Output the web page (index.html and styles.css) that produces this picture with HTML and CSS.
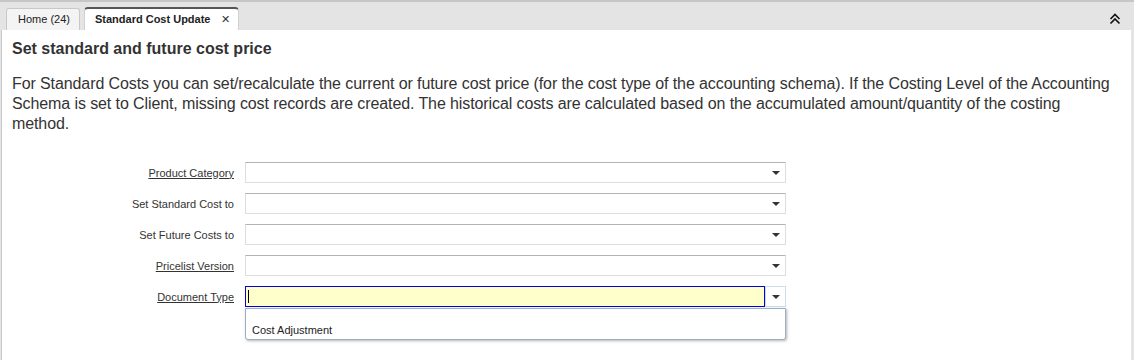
FILE: index.html
```html
<!DOCTYPE html>
<html lang="en">
<head>
  <meta charset="UTF-8">
  <title>Standard Cost Update</title>
  <link rel="stylesheet" href="styles.css">
</head>
<body>

<div class="window">
  <div class="tabbar">
    <div class="tab">Home (24)</div>
    <div class="tab active">Standard Cost Update <span class="close">&#x2715;</span></div>
    <div class="spacer"></div>
    <svg class="collapse" width="12" height="12" viewBox="0 0 12 12">
      <path d="M1.5 6 L6 1.5 L10.5 6 M1.5 10.5 L6 6 L10.5 10.5" fill="none" stroke="#111" stroke-width="1.6"/>
    </svg>
  </div>

  <div class="content">
    <h1 class="title">Set standard and future cost price</h1>
    <p class="desc">For Standard Costs you can set/recalculate the current or future cost price (for the cost type of the accounting schema). If the Costing Level of the Accounting Schema is set to Client, missing cost records are created. The historical costs are calculated based on the accumulated amount/quantity of the costing method.</p>

    <div class="form">
      <div class="row">
        <label class="lbl link">Product Category</label>
        <div class="combo"><div class="field"></div><div class="arrow"></div></div>
      </div>
      <div class="row">
        <label class="lbl">Set Standard Cost to</label>
        <div class="combo"><div class="field"></div><div class="arrow"></div></div>
      </div>
      <div class="row">
        <label class="lbl">Set Future Costs to</label>
        <div class="combo"><div class="field"></div><div class="arrow"></div></div>
      </div>
      <div class="row">
        <label class="lbl link">Pricelist Version</label>
        <div class="combo"><div class="field"></div><div class="arrow"></div></div>
      </div>
      <div class="row">
        <label class="lbl link">Document Type</label>
        <div class="combo open">
          <div class="field focus"><span class="caret"></span></div><div class="arrow"></div>
          <div class="popup">
            <div class="item empty"></div>
            <div class="item">Cost Adjustment</div>
          </div>
        </div>
      </div>
    </div>
  </div>
</div>

</body>
</html>
```

FILE: styles.css
```css
body { margin: 0; font-family: "Liberation Sans", Arial, sans-serif; color: #333; background: #fff; }
.window { width: 1134px; height: 360px; background: #e4e4e4; border-top: 2px solid #c6c6c6; box-sizing: border-box; display: flex; flex-direction: column; overflow: hidden; }
.tabbar { display: flex; align-items: flex-end; height: 28px; padding-left: 6px; gap: 4px; flex-shrink: 0; }
.tab { height: 22px; line-height: 20px; padding: 0 9px 0 11px; font-size: 11px; color: #222; background: #f4f4f4; border: 1px solid #c8c8c8; border-bottom: none; border-radius: 3px 3px 0 0; box-sizing: border-box; }
.tab.active { background: #fff; font-weight: bold; border: 1px solid #d0d0d0; border-top: 2px solid #555; border-bottom: none; border-radius: 4px 4px 0 0; height: 23px; padding: 0 8px 0 10px; }
.close { font-weight: normal; font-size: 11px; margin-left: 7px; color: #333; }
.spacer { flex: 1; }
.collapse { align-self: center; margin: 6px 13px 0 0; }
.content { flex: 1; background: #fff; margin: 0 3px 0 1px; border-left: 1px solid #c9c9c9; padding: 0 10px; }
.title { font-size: 16px; font-weight: bold; margin: 10px 0 0; color: #333; line-height: 18px; }
.desc { font-size: 16px; line-height: 20px; margin: 16px 0 0; color: #333; letter-spacing: -0.1px; }
.form { margin-top: 28px; display: flex; flex-direction: column; gap: 10px; }
.row { display: flex; align-items: center; height: 21px; }
.lbl { width: 222px; text-align: right; font-size: 11px; color: #333; padding-right: 11px; }
.lbl.link { text-decoration: underline; }
.combo { position: relative; display: flex; width: 541px; height: 21px; }
.field { flex: 1; border: 1px solid #ddd; border-top-color: #b4b4b4; border-right: none; background: #fff; }
.arrow { width: 19px; border: 1px solid #ddd; border-top-color: #b4b4b4; border-left: none; position: relative; }
.arrow::after { content: ""; position: absolute; left: 6px; top: 8px; border-left: 4px solid transparent; border-right: 4px solid transparent; border-top: 4px solid #333; }
.open .field.focus { background: #ffffcc; border: 1px solid #0000e0; position: relative; }
.open .arrow { border-color: #cfdced; border-left: 1px solid #cfdced; }
.caret { position: absolute; left: 2px; top: 3px; width: 1px; height: 13px; background: #000; }
.popup { position: absolute; left: 0; top: 22px; width: 541px; height: 32px; background: #fff; border: 1px solid #9aafc4; border-radius: 0 0 3px 3px; box-shadow: 1px 1px 3px rgba(0,0,0,0.3); box-sizing: border-box; font-size: 11px; color: #222; }
.item { height: 15px; line-height: 15px; padding-left: 6px; }
.item.empty { height: 14px; }
```
